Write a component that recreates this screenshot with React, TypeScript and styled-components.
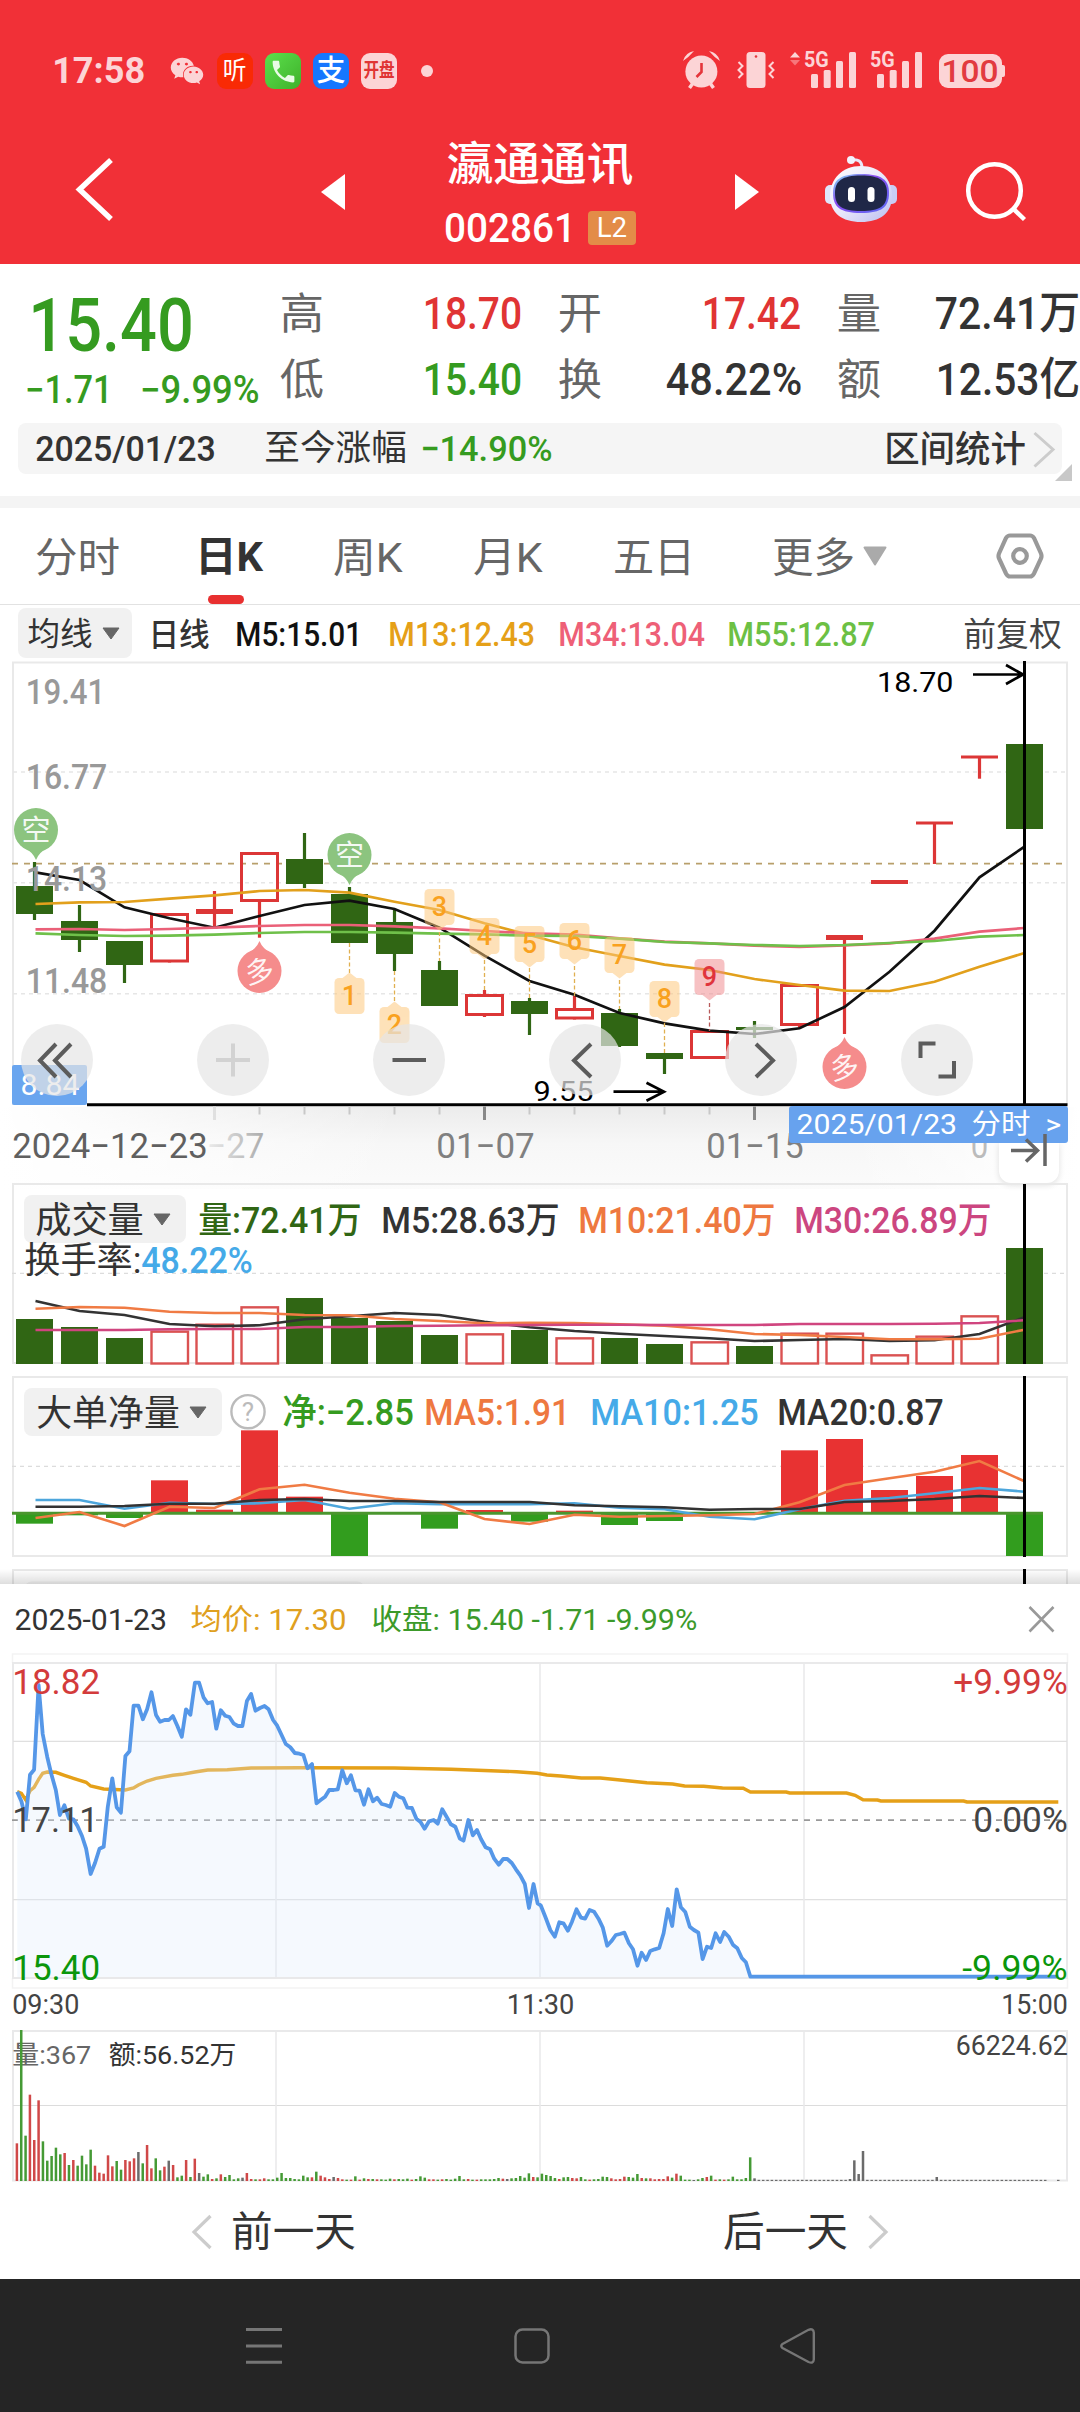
import React, { useLayoutEffect, useRef, useState } from 'react';
import styled, { createGlobalStyle } from 'styled-components';
import { FaWeixin } from 'react-icons/fa';
import { MdPhone } from 'react-icons/md';

const FONT = `Roboto, "Noto Sans CJK SC", sans-serif`;
const RED = '#e03434';
const GREEN = '#359b20';
const DARK_GREEN = '#306614';
const TINT = '#fcd4d6';

const Global = createGlobalStyle`
  body { margin: 0; background: #fff; }
  * { box-sizing: border-box; }
  svg { display: block; flex: none; overflow: visible; }
`;

const Screen = styled.div`
  width: 1080px;
  height: 2412px;
  display: flex;
  flex-direction: column;
  overflow: hidden;
  background: #fff;
  font-family: ${FONT};
  color: #333;
`;

/* ---------- text fitted to a column width ---------- */
const FitBox = styled.span<{ $w: number; $ml: number; $dy: number }>`
  display: block;
  flex: none;
  width: ${(p) => p.$w}px;
  margin-left: ${(p) => p.$ml}px;
  white-space: pre;
  padding-top: ${(p) => p.$dy}px;
`;
const FitInner = styled.span<{ $size: number; $lh: number; $c: string; $wt: number }>`
  display: inline-block;
  vertical-align: top;
  transform-origin: 0 50%;
  font-size: ${(p) => p.$size}px;
  line-height: ${(p) => p.$lh}px;
  color: ${(p) => p.$c};
  font-weight: ${(p) => p.$wt};
`;

interface FitProps {
  w: number;
  size: number;
  children: string;
  ml?: number;
  lh?: number;
  c?: string;
  wt?: number;
  dy?: number;
}

function Fit({ w, size, children, ml = 0, lh, c = '#333', wt = 400, dy = 0 }: FitProps) {
  const ref = useRef<HTMLSpanElement>(null);
  const [k, setK] = useState(1);
  useLayoutEffect(() => {
    if (ref.current) setK((w + size * 0.1) / ref.current.offsetWidth);
  }, [w, size, children]);
  return (
    <FitBox $w={w} $ml={ml} $dy={dy}>
      <FitInner
        ref={ref}
        $size={size}
        $lh={lh ?? Math.round(size * 1.2)}
        $c={c}
        $wt={wt}
        style={{ transform: `translateX(${-size * 0.05}px) scaleX(${k})` }}
      >
        {children}
      </FitInner>
    </FitBox>
  );
}

/* ---------- drawing helpers ---------- */
const Gap = styled.div<{ $ml: number }>`
  flex: none;
  margin-left: ${(p) => p.$ml}px;
`;

function Draw({ x, y, w, h, ml = 0, children }: { x: number; y: number; w: number; h: number; ml?: number; children: React.ReactNode }) {
  return (
    <Gap $ml={ml}>
      <svg width={w} height={h} viewBox={`${x} ${y} ${w} ${h}`} fill="none">
        {children}
      </svg>
    </Gap>
  );
}

function Label({ x, y, w, size, c = '#333', wt = 400, o = 1, children }: { x: number; y: number; w: number; size: number; c?: string; wt?: number; o?: number; children: string }) {
  return (
    <text
      x={x - size * 0.05}
      y={y}
      fontSize={size}
      fontFamily={FONT}
      fontWeight={wt}
      fill={c}
      opacity={o}
      textLength={w + size * 0.1}
      lengthAdjust="spacingAndGlyphs"
    >
      {children}
    </text>
  );
}

/* ---------- status bar ---------- */
const RedHead = styled.header`
  height: 264px;
  flex: none;
  background: #f13037;
`;
const StatusBar = styled.div`
  height: 142px;
  display: flex;
  align-items: center;
`;
const AppIcon = styled.div<{ $bg: string; $ml?: number }>`
  width: 36px;
  height: 36px;
  margin-left: ${(p) => p.$ml ?? 12}px;
  border-radius: 9px;
  background: ${(p) => p.$bg};
  display: flex;
  align-items: center;
  justify-content: center;
  flex: none;
`;
const Glyph = styled.span<{ $size: number; $c: string; $wt?: number; $sx?: number }>`
  font-size: ${(p) => p.$size}px;
  line-height: 36px;
  color: ${(p) => p.$c};
  font-weight: ${(p) => p.$wt ?? 400};
  transform: scaleX(${(p) => p.$sx ?? 1});
  white-space: nowrap;
`;
const Dot = styled.i`
  width: 12px;
  height: 12px;
  margin-left: 24px;
  border-radius: 50%;
  background: ${TINT};
`;

function Signal({ x, children }: { x: number; children?: React.ReactNode }) {
  return (
    <>
      {children}
      <Label x={x} y={67} w={22.5} size={22.5} c={TINT} wt={700}>5G</Label>
      <g fill={TINT}>
        <rect x={x + 6} y={74} width={7} height={14} rx={1.5} />
        <rect x={x + 18.7} y={70} width={7} height={18} rx={1.5} />
        <rect x={x + 31} y={61} width={7} height={27} rx={1.5} />
        <rect x={x + 44} y={52} width={7} height={36} rx={1.5} />
      </g>
    </>
  );
}

function Status() {
  return (
    <StatusBar>
      <Fit ml={54} w={89} size={37} c={TINT} wt={700} lh={46}>17:58</Fit>
      <Gap $ml={27}>
        <FaWeixin size={34} color={TINT} />
      </Gap>
      <AppIcon $bg="#f92a05" $ml={13}><Glyph $size={25} $c="#fff" $sx={0.95}>听</Glyph></AppIcon>
      <AppIcon $bg="linear-gradient(135deg,#5ce04c,#3eb12b)"><MdPhone size={29} color="#e9fbe6" /></AppIcon>
      <AppIcon $bg="#1677ff"><Glyph $size={29} $c="#fff" $wt={500}>支</Glyph></AppIcon>
      <AppIcon $bg={TINT}><Glyph $size={19} $c={RED} $wt={700} $sx={0.82}>开盘</Glyph></AppIcon>
      <Dot />
      <Draw x={680} y={50} w={44} h={42} ml={247}>
        <circle cx={701.4} cy={71.5} r={16} fill={TINT} />
        <path d="M683 61a14 14 0 0 1 11-10q-5 6-11 10zM720 61a14 14 0 0 0-11-10q5 6 11 10z" fill={TINT} />
        <path d="M693 83l-3.5 5M710 83l3.500 5" stroke={TINT} strokeWidth={3.5} />
        <path d="M701.500 63v9l-5 5" stroke="#e5353b" strokeWidth={2.6} />
      </Draw>
      <Draw x={735} y={50} w={42} h={42} ml={11}>
        <rect x={746.500} y={52} width={19} height={36} rx={3.500} fill={TINT} />
        <circle cx={756} cy={56.500} r={1.300} fill="#e5353b" />
        <path d="M738.500 62l4 4-4 4 4 4-4 4M773.500 62l-4 4 4 4-4 4 4 4" stroke={TINT} strokeWidth={2} />
      </Draw>
      <Draw x={788} y={50} w={70} h={42} ml={11}>
        <Signal x={805}>
          <path d="M790 57.500l5-5.500 5 5.500z" fill={TINT} />
          <path d="M790 60l5 5.500 5-5.500z" fill="#f7767b" />
        </Signal>
      </Draw>
      <Draw x={869} y={50} w={55} h={42} ml={11}>
        <Signal x={871} />
      </Draw>
      <Draw x={937} y={50} w={70} h={42} ml={13}>
        <rect x={939} y={54} width={63} height={34} rx={9} fill={TINT} />
        <rect x={1000} y={65} width={5} height={12} rx={2} fill={TINT} />
        <Label x={943} y={82.200} w={54} size={31} c="#e23a40" wt={500}>100</Label>
      </Draw>
    </StatusBar>
  );
}

/* ---------- title bar ---------- */
const TitleBar = styled.div`
  height: 122px;
  display: flex;
  align-items: flex-start;
`;
const TitleStack = styled.div`
  width: 200px;
  margin-left: 85px;
  display: flex;
  flex-direction: column;
  gap: 19px;
`;
const CodeRow = styled.div`
  display: flex;
  align-items: center;
  height: 46px;
`;
const Badge = styled.div`
  width: 48px;
  height: 34px;
  margin-left: 14px;
  padding-left: 10px;
  border-radius: 4px;
  background: #e38c48;
`;

function Robot() {
  return (
    <>
      <defs>
        <linearGradient id="rb" x1="0" y1="0" x2="1" y2="1">
          <stop offset="0" stopColor="#fff" />
          <stop offset="0.5" stopColor="#e9e8fa" />
          <stop offset="1" stopColor="#b9bdf0" />
        </linearGradient>
        <linearGradient id="rf" x1="0" y1="0" x2="1" y2="1">
          <stop offset="0" stopColor="#7fe3f5" />
          <stop offset="0.4" stopColor="#8a4cf0" />
          <stop offset="1" stopColor="#5a6cf2" />
        </linearGradient>
      </defs>
      <path d="M851 160q11-2 11 8" stroke="#e9e8fa" strokeWidth={3} />
      <circle cx={851} cy={160} r={4} fill="#f3f3fd" />
      <rect x={825} y={185} width={12} height={19} rx={5} fill="#dfe6fb" />
      <rect x={885} y={185} width={12} height={19} rx={5} fill="#c9cdf5" />
      <path d="M861 166C880 166 892 179 892 196 892 213 880 222 861 222 842 222 830 213 830 196 830 179 842 166 861 166z" fill="url(#rb)" />
      <path d="M861 174C882 174 889 180 889 193 889 207 882 213 861 213 840 213 833 207 833 193 833 180 840 174 861 174z" fill="url(#rf)" />
      <path d="M861 175.500C880 175.500 887 181 887 193 887 206 880 211 861 211 842 211 835 206 835 193 835 181 842 175.500 861 175.500z" fill="#1f2747" />
      <rect x={848} y={187} width={7} height={15} rx={3.500} fill="#fff" />
      <rect x={867.500} y={187} width={7} height={15} rx={3.500} fill="#fff" />
    </>
  );
}

function Title() {
  return (
    <TitleBar>
      <Draw x={60} y={142} w={70} h={100} ml={60}>
        <path d="M111 160L79.500 189.500 111 219" stroke="#fff" strokeWidth={5.500} />
      </Draw>
      <Draw x={310} y={142} w={45} h={100} ml={180}>
        <path d="M321 192l24-18v36z" fill="#fff" />
      </Draw>
      <TitleStack>
        <Fit ml={9} w={182} size={46} lh={44} c="#fff" wt={500}>瀛通通讯</Fit>
        <CodeRow>
          <Fit ml={6} w={128} size={41} lh={46} c="#fff" wt={500}>002861</Fit>
          <Badge><Fit w={28} size={27} lh={34} c="#fff">L2</Fit></Badge>
        </CodeRow>
      </TitleStack>
      <Draw x={725} y={142} w={45} h={100} ml={85}>
        <path d="M759 192l-24-18v36z" fill="#fff" />
      </Draw>
      <Draw x={815} y={142} w={90} h={100} ml={45}>
        <Robot />
      </Draw>
      <Draw x={955} y={142} w={80} h={100} ml={50}>
        <circle cx={994.500} cy={190.500} r={26.300} stroke="#fff" strokeWidth={4.500} />
        <path d="M1012.500 208l12 11.500" stroke="#fff" strokeWidth={4.500} />
      </Draw>
    </TitleBar>
  );
}

/* ---------- quote ---------- */
const Quote = styled.section`
  height: 159px;
  flex: none;
  display: flex;
`;
const PriceCol = styled.div`
  width: 282px;
  padding-top: 22px;
  flex: none;
`;
const Row = styled.div<{ $h: number }>`
  display: flex;
  align-items: center;
  height: ${(p) => p.$h}px;
`;
const Facts = styled.div`
  display: flex;
  flex-direction: column;
  padding-top: 17px;
`;
const InfoBar = styled.div`
  width: 1044px;
  height: 51px;
  margin: 0 18px;
  flex: none;
  display: flex;
  align-items: center;
  border-radius: 8px;
  background: #f5f5f5;
`;
const Band = styled.div`
  height: 12px;
  margin-top: 22px;
  flex: none;
  background: #f4f4f4;
`;

function QuotePanel() {
  return (
    <>
      <Quote>
        <PriceCol>
          <Row $h={80}><Fit ml={32} w={158} size={74.500} lh={80} c={GREEN} wt={500}>15.40</Fit></Row>
          <Row $h={48}>
            <Fit ml={27} w={84} size={38} lh={48} c={GREEN} wt={500}>−1.71</Fit>
            <Fit ml={31} w={116} size={38} lh={48} c={GREEN} wt={500}>−9.99%</Fit>
          </Row>
        </PriceCol>
        <Facts>
          <Row $h={66}>
            <Fit ml={0} w={40} size={43} lh={66} c="#666">高</Fit>
            <Fit ml={103} w={95} size={45} lh={66} c={RED} wt={500}>18.70</Fit>
            <Fit ml={40} w={40} size={43} lh={66} c="#666">开</Fit>
            <Fit ml={104} w={95} size={45} lh={66} c={RED} wt={500}>17.42</Fit>
            <Fit ml={40} w={40} size={43} lh={66} c="#666">量</Fit>
            <Fit ml={58} w={141} size={45} lh={66} wt={500}>72.41万</Fit>
          </Row>
          <Row $h={66}>
            <Fit ml={0} w={40} size={43} lh={66} c="#666">低</Fit>
            <Fit ml={103} w={95} size={45} lh={66} c={GREEN} wt={500}>15.40</Fit>
            <Fit ml={40} w={40} size={43} lh={66} c="#666">换</Fit>
            <Fit ml={68} w={132} size={45} lh={66} wt={500}>48.22%</Fit>
            <Fit ml={39} w={40} size={43} lh={66} c="#666">额</Fit>
            <Fit ml={59} w={140} size={45} lh={66} wt={500}>12.53亿</Fit>
          </Row>
        </Facts>
      </Quote>
      <InfoBar>
        <Fit ml={19} w={177} size={35.500} lh={48} wt={500}>2025/01/23</Fit>
        <Fit ml={52} w={139} size={35} lh={48}>至今涨幅</Fit>
        <Fit ml={17} w={129} size={35.500} lh={48} c={GREEN} wt={500}>−14.90%</Fit>
        <Fit ml={335} w={138} size={36} lh={48} dy={3} wt={500}>区间统计</Fit>
        <Draw x={1028} y={423} w={45} h={51} ml={4}>
          <path d="M1034.500 433l18.500 16.500-18.500 17" stroke="#ccc" strokeWidth={3} />
          <path d="M1052 483h22v-22z" fill="#fff" />
          <path d="M1055 481h17v-17z" fill="#c8c8c8" />
        </Draw>
      </InfoBar>
      <Band />
    </>
  );
}

/* ---------- tabs ---------- */
const TabBar = styled.nav`
  height: 97px;
  flex: none;
  display: flex;
  border-bottom: 1px solid #e2e2e2;
`;
const Tab = styled.div<{ $x: number; $w: number }>`
  width: ${(p) => p.$w}px;
  margin-left: ${(p) => p.$x}px;
  height: 96px;
  padding-top: 2px;
  display: flex;
  flex-direction: column;
  align-items: center;
  justify-content: space-between;
`;
const Underline = styled.i`
  width: 36px;
  height: 9px;
  flex: none;
  margin-right: 7px;
  border-radius: 5px;
  background: #e83030;
`;

function Tabs() {
  return (
    <TabBar>
      <Tab $x={37} $w={81}><Fit w={81} size={41} lh={94} dy={1} c="#666">分时</Fit></Tab>
      <Tab $x={79} $w={64}>
        <Fit w={64} size={41} lh={76} dy={9} wt={700}>日K</Fit>
        <Underline />
      </Tab>
      <Tab $x={74} $w={66}><Fit w={66} size={41} lh={94} dy={1} c="#666">周K</Fit></Tab>
      <Tab $x={74} $w={66}><Fit w={66} size={41} lh={94} dy={1} c="#666">月K</Fit></Tab>
      <Tab $x={74} $w={78}><Fit w={78} size={41} lh={94} dy={1} c="#666">五日</Fit></Tab>
      <Tab $x={81} $w={79}><Fit w={79} size={41} lh={94} dy={1} c="#666">更多</Fit></Tab>
      <Draw x={862} y={508} w={26} h={96} ml={9}>
        <path d="M864.500 547.500h21l-10.500 17z" fill="#aaa" stroke="#aaa" strokeLinejoin="round" strokeWidth={2} />
      </Draw>
      <Draw x={994} y={508} w={52} h={96} ml={106}>
        <path d="M1010 535.500h20q2.500 0 4 2.500l7 15.500q1 2.500 0 5l-7 15q-1.500 3-4 3h-20q-2.500 0-4-3l-7-15q-1-2.500 0-5l7-15.500q1.500-2.500 4-2.500z" stroke="#999" strokeWidth={4.200} />
        <circle cx={1020} cy={556} r={6.800} stroke="#999" strokeWidth={4.200} />
      </Draw>
    </TabBar>
  );
}

/* ---------- indicator rows ---------- */
const Pill = styled.div<{ $w: number; $h: number; $ml: number; $pl: number }>`
  width: ${(p) => p.$w}px;
  height: ${(p) => p.$h}px;
  margin-left: ${(p) => p.$ml}px;
  padding-left: ${(p) => p.$pl}px;
  flex: none;
  display: flex;
  align-items: center;
  gap: 11px;
  border-radius: 8px;
  background: #f1f1f1;
`;
function Caret() {
  return (
    <svg width="18" height="13" viewBox="0 0 18 13">
      <path d="M1 1h16L9 12z" fill="#666" stroke="#666" strokeLinejoin="round" />
    </svg>
  );
}

const MaRow = styled.div`
  height: 56px;
  flex: none;
  display: flex;
  align-items: center;
`;

function MovingAverages() {
  return (
    <MaRow>
      <Pill $w={114} $h={50} $ml={18} $pl={11}>
        <Fit w={62} size={32} lh={50} dy={2}>均线</Fit>
        <Caret />
      </Pill>
      <Fit ml={18} w={58} size={32} lh={50} dy={3} wt={500}>日线</Fit>
      <Fit ml={29} w={124} size={33} lh={50} dy={3} c="#111" wt={500}>M5:15.01</Fit>
      <Fit ml={29} w={143} size={33} lh={50} dy={3} c="#e5a018" wt={500}>M13:12.43</Fit>
      <Fit ml={27} w={143} size={33} lh={50} dy={3} c="#ee6077" wt={500}>M34:13.04</Fit>
      <Fit ml={26} w={144} size={33} lh={50} dy={3} c="#6cc044" wt={500}>M55:12.87</Fit>
      <Fit ml={92} w={95} size={33} lh={50} dy={3} c="#444">前复权</Fit>
    </MaRow>
  );
}

/* ---------- daily chart ---------- */
const cx = (i: number) => 34.5 + 45 * i;
const pts = (ys: number[], base: number) => ys.map((y, i) => `${i === 0 ? 35.5 : cx(i)},${(base + y / 3).toFixed(1)}`).join(' ');

type Kind = 'g' | 'r' | 's';
// kind, body top, body bottom, high, low
const CANDLES: [Kind, number, number, number, number][] = [
  ['g', 886, 914, 862, 920], ['g', 921, 940, 905, 952], ['g', 941, 965, 941, 983], ['r', 913, 962.5, 913, 962],
  ['s', 909, 914, 891, 928], ['r', 852, 902, 852, 937.7], ['g', 859, 884, 833, 888], ['g', 894, 943, 887, 943],
  ['g', 922, 954, 909, 971], ['g', 970, 1006, 961, 1006], ['r', 994, 1016, 990, 1017], ['g', 1001, 1014, 998, 1035],
  ['r', 1008, 1019.5, 996, 1019], ['g', 1013, 1046, 1009, 1047], ['g', 1053, 1059, 1053, 1074], ['r', 1030, 1059, 1030, 1059],
  ['g', 1027, 1030, 1021, 1038], ['r', 984, 1026, 984, 1029], ['s', 935, 940, 935, 1034], ['s', 880, 884, 880, 884],
  ['s', 821.5, 824.5, 822, 864], ['s', 755.5, 758.5, 756, 778.7], ['g', 744, 829, 744, 829],
];
const M5 = [637, 660, 742, 775, 803, 768, 735, 722, 747, 803, 887, 963, 1004, 1059, 1090, 1112, 1122, 1105, 1041, 935, 812, 652, 560];
const M13 = [732, 727, 726, 716, 706, 693, 690, 698, 725, 750, 790, 825, 862, 888, 914, 930, 957, 975, 992, 993, 965, 920, 879];
const M34 = [808, 807, 810, 807, 803, 798, 795, 795, 799, 805, 813, 820, 824, 835, 845, 850, 857, 861, 856, 850, 836, 815, 804];
const M55 = [820, 825, 828, 827, 824, 819, 816, 816, 818, 821, 823, 827, 828, 836, 846, 850, 855, 858, 855, 849, 843, 830, 825];

// number, body top, pointer direction, dash from, dash to
const TAGS: [number, number, 'up' | 'down', number, number][] = [
  [1, 978, 'up', 943, 973], [2, 1007, 'up', 971, 1001], [3, 889, 'down', 932, 961], [4, 918, 'down', 960, 990], [5, 926, 'down', 968, 998],
  [6, 923, 'down', 966, 996], [7, 937, 'down', 980, 1009], [8, 981, 'down', 1023, 1053], [9, 959, 'down', 1003, 1031],
];

function Pin({ x, y, up, children }: { x: number; y: number; up?: boolean; children: string }) {
  const s = up ? -1 : 1;
  return (
    <g>
      <path d={`M${x - 13} ${y + s * 17}Q${x - 3} ${y + s * 22} ${x} ${y + s * 30}Q${x + 3} ${y + s * 22} ${x + 13} ${y + s * 17}z`} fill={up ? '#f58c8c' : '#8cc47f'} />
      <circle cx={x} cy={y} r={22} fill={up ? '#f58c8c' : '#8cc47f'} />
      <text x={x} y={y + 11} fontSize={29} textAnchor="middle" fontFamily={FONT} fill="#fff" fillOpacity={0.92} transform={up ? `rotate(-10 ${x} ${y})` : undefined}>{children}</text>
    </g>
  );
}

const ChartArea = styled.section`
  position: relative;
  height: 523px;
  flex: none;
`;
const AxisShade = styled.div`
  position: absolute;
  left: 0;
  right: 0;
  top: 446px;
  height: 82px;
  background: linear-gradient(90deg, #fff 0, rgba(255, 255, 255, 0) 400px, rgba(255, 255, 255, 0) 850px, #fff 1080px),
    linear-gradient(180deg, #ececec 0, #f7f7f7 45%, #fbfbfb 100%);
`;
const Layer = styled.div`
  position: absolute;
  inset: 0;
`;
const Tools = styled.div`
  position: absolute;
  left: 21px;
  top: 363px;
  display: flex;
  gap: 104px;
`;
const Tool = styled.button`
  width: 72px;
  height: 72px;
  padding: 0;
  border: 0;
  border-radius: 50%;
  background: rgba(229, 229, 229, 0.7);
`;
const DateBadge = styled.div`
  position: absolute;
  left: 789px;
  top: 444.500px;
  width: 278.500px;
  height: 37px;
  display: flex;
  align-items: center;
  border-radius: 3px;
  background: #67a2ee;
`;
const JumpEnd = styled.div`
  position: absolute;
  left: 999px;
  top: 481px;
  width: 60px;
  height: 41px;
  border-radius: 0 0 12px 12px;
  background: #fff;
  box-shadow: 0 2px 6px rgba(0, 0, 0, 0.12);
`;

const TOOL_PATHS: [string, string][] = [
  ['M35 20L19 36.500 35 53M50 20L34 36.500 50 53', '#5c5c5c'],
  ['M36 19.500v33M19 36h34', '#d2d2d2'],
  ['M19.500 36h33.500', '#5c5c5c'],
  ['M42 20L25 36.500 42 53', '#5c5c5c'],
  ['M31 20L48 36.500 31 53', '#5c5c5c'],
  ['M34.500 19.500H19.500V34M53 37v15.500H37.500', '#5c5c5c'],
];

function DailyChart() {
  return (
    <ChartArea>
      <AxisShade />
      <Layer>
        <svg width={1080} height={523} viewBox="0 661 1080 523" fill="none">
          <path d="M13 1105V662.500H1067V1105" stroke="#e9e9e9" strokeWidth={2} />
          <path d="M13 772H1067M13 882.700H1067M13 993.700H1067" stroke="#e6e6e6" strokeWidth={1.500} strokeDasharray="4 4" />
          <path d="M12 863.700H1062" stroke="#b89f6b" strokeWidth={1.700} strokeDasharray="6 6" />
          <rect x={12} y={1065} width={75} height={40} rx={2} fill="#69a5ef" />
          <Label x={22} y={1095} w={56} size={29} c="#fff">8.84</Label>

          {CANDLES.map(([k, t, b, hi, lo], i) => {
            const x = cx(i);
            const c = k === 'g' ? DARK_GREEN : '#dc3636';
            return (
              <g key={i}>
                {k === 'r' ? (
                  <>
                    <path d={`M${x} ${hi}V${t}M${x} ${b}V${lo}`} stroke={c} strokeWidth={3.2} />
                    <rect x={x - 18} y={t + 1.5} width={36} height={b - t - 3} stroke={c} strokeWidth={3} />
                  </>
                ) : (
                  <>
                    <path d={`M${x} ${hi}V${lo}`} stroke={c} strokeWidth={3.2} />
                    <rect x={x - 18.500} y={t} width={37} height={b - t} fill={c} />
                  </>
                )}
              </g>
            );
          })}
          <polyline points={pts(M5, 660)} stroke="#111" strokeWidth={2.700} />
          <polyline points={pts(M13, 660)} stroke="#e2a01c" strokeWidth={2.700} />
          <polyline points={pts(M34, 660)} stroke="#ea6078" strokeWidth={2.700} />
          <polyline points={pts(M55, 660)} stroke="#6fc04a" strokeWidth={2.700} />

          <Label x={27.500} y={703.700} w={76} size={35.500} c="#999" wt={500}>19.41</Label>
          <Label x={27.500} y={789} w={78} size={35.500} c="#999" wt={500}>16.77</Label>
          <Label x={27.500} y={890.700} w={78} size={35.500} c="#999" wt={500}>14.13</Label>
          <Label x={27.500} y={992.700} w={78} size={35.500} c="#999" wt={500}>11.48</Label>

          {TAGS.map(([n, top, dir, a, b]) => {
            const x = cx(n + 6);
            const last = n === 9;
            const tip = dir === 'up' ? `M${x - 7} ${top}L${x} ${top - 5.5}L${x + 7} ${top}z` : `M${x - 7} ${top + 36}L${x} ${top + 41.500}L${x + 7} ${top + 36}z`;
            return (
              <g key={n}>
                <path d={`M${x} ${a}V${b}`} stroke={last ? '#b85a5a' : '#e0b050'} strokeWidth={1.300} strokeDasharray="4 2.500" />
                <g fill={last ? '#f08a8e' : '#fec778'} opacity={0.52}>
                  <rect x={x - 15} y={top} width={30} height={36} rx={4.500} />
                  <path d={tip} />
                </g>
                <text x={x} y={top + 27} fontSize={27} fontWeight={500} textAnchor="middle" fontFamily={FONT} fill={last ? '#e0343c' : '#f9a11f'}>{n}</text>
              </g>
            );
          })}

          <Pin x={36} y={830}>空</Pin>
          <Pin x={349.500} y={855}>空</Pin>
          <Pin x={259.500} y={971} up>多</Pin>
          <Pin x={844.500} y={1067} up>多</Pin>

          <Label x={878.500} y={692} w={73.500} size={28.500} c="#000">18.70</Label>
          <path d="M973 674.500H1023M1006 665L1023 674.500 1006 684" stroke="#000" strokeWidth={2.700} />
          <Label x={535} y={1100.700} w={57} size={28.500} c="#000">9.55</Label>
          <path d="M613.500 1091.700H664M646.500 1082.700L664 1091.700 646.500 1100.700" stroke="#000" strokeWidth={2.700} />

          <path d="M87 1104.700H1067.500" stroke="#000" strokeWidth={3} />
          <path d="M1024.500 661V1105" stroke="#000" strokeWidth={3} />
          {[5, 6, 7, 8, 9, 11, 12, 13, 14, 15].map((i) => (
            <path key={i} d={`M${cx(i)} 1106.500v8`} stroke="#c8c8c8" strokeWidth={2} />
          ))}
          <path d="M214.500 1106.500v13.500" stroke="#e0e0e0" strokeWidth={3} />
          <path d="M484.500 1106.500v13.500M754.500 1106.500v13.500" stroke="#888" strokeWidth={3} />
          <Label x={14} y={1158} w={192} size={35} c="#606060">2024−12−23</Label>
          <defs>
            <linearGradient id="fade" gradientUnits="userSpaceOnUse" x1="205" y1="0" x2="265" y2="0">
              <stop offset="0" stopColor="#eee" />
              <stop offset="1" stopColor="#aaa" />
            </linearGradient>
          </defs>
          <Label x={208.500} y={1158} w={54} size={35} c="url(#fade)">−27</Label>
          <Label x={438} y={1158} w={95} size={35} c="#808080">01−07</Label>
          <Label x={708} y={1158} w={94} size={35} c="#808080">01−15</Label>
          <Label x={972.500} y={1158} w={14} size={35} c="#bbb">0</Label>
        </svg>
      </Layer>
      <Tools>
        {TOOL_PATHS.map(([d, c]) => (
          <Tool key={d}>
            <svg width={72} height={72} viewBox="0 0 72 72" fill="none">
              <path d={d} stroke={c} strokeWidth={4} />
            </svg>
          </Tool>
        ))}
      </Tools>
      <JumpEnd />
      <DateBadge>
        <Fit ml={9} w={158} size={28.500} lh={37} dy={1} c="#fff">2025/01/23</Fit>
        <Fit ml={17} w={56} size={28.500} lh={37} dy={1} c="#fff">分时</Fit>
        <Fit ml={18} w={13} size={28.500} lh={37} dy={1} c="#fff">&gt;</Fit>
      </DateBadge>
      <Layer>
        <svg width={1080} height={523} viewBox="0 661 1080 523" fill="none">
          <path d="M1011 1150.500H1037M1026 1139.500L1037.500 1150.500 1026 1161.500M1045 1134V1166" stroke="#666" strokeWidth={3.500} />
        </svg>
      </Layer>
    </ChartArea>
  );
}

/* ---------- indicator panels ---------- */
const SubPanel = styled.section<{ $h: number }>`
  position: relative;
  height: ${(p) => p.$h}px;
  flex: none;
`;
const Legend = styled.div<{ $pt: number }>`
  position: relative;
  padding-top: ${(p) => p.$pt}px;
`;

const VOL: [Kind, number][] = [
  ['g', 447], ['g', 471], ['g', 504], ['r', 482], ['r', 461], ['r', 409], ['g', 384], ['g', 444], ['g', 453], ['g', 495], ['r', 490], ['g', 480],
  ['r', 502], ['g', 504], ['g', 522], ['r', 514], ['g', 528], ['r', 488], ['r', 488], ['r', 553], ['r', 497], ['r', 436], ['g', 234],
];
const V5 = [393, 423, 435, 462, 469, 466, 448, 439, 429, 435, 455, 472, 483, 491, 498, 505, 513, 510, 507, 513, 511, 492, 442];
const V10 = [416, 411, 413, 425, 429, 429, 435, 436, 447, 453, 460, 458, 459, 463, 467, 478, 492, 495, 501, 508, 508, 506, 479];
const V30 = [480, 480, 480, 478, 477, 477, 471, 471, 468, 467, 466, 465, 464, 464, 465, 465, 465, 462, 462, 462, 461, 459, 451];

function VolumePanel() {
  return (
    <SubPanel $h={192}>
      <Layer>
        <svg width={1080} height={192} viewBox="0 1184 1080 192" fill="none">
          <rect x={13} y={1184} width={1054} height={179} stroke="#e9e9e9" strokeWidth={2} />
          <path d="M12 1273.300H1067" stroke="#dcdcdc" strokeWidth={1.200} strokeDasharray="4 4" />
          {VOL.map(([k, y], i) => {
            const t = 1170 + y / 3;
            return k === 'g' ? (
              <rect key={i} x={cx(i) - 18.500} y={t} width={37} height={1364 - t} fill={DARK_GREEN} />
            ) : (
              <rect key={i} x={cx(i) - 18} y={t + 1} width={36.500} height={1363.500 - t - 1} fill="#fff" stroke="#da5252" strokeWidth={2.400} />
            );
          })}
          <polyline points={pts(V5, 1170)} stroke="#333" strokeWidth={2.600} />
          <polyline points={pts(V10, 1170)} stroke="#f07b44" strokeWidth={2.600} />
          <polyline points={pts(V30, 1170)} stroke="#d0457f" strokeWidth={2.600} />
          <path d="M1024.500 1184V1364" stroke="#000" strokeWidth={3} />
        </svg>
      </Layer>
      <Legend $pt={11}>
        <Row $h={48}>
          <Pill $w={162} $h={48} $ml={24} $pl={13}>
            <Fit w={105} size={36} lh={48} dy={3}>成交量</Fit>
            <Caret />
          </Pill>
          <Fit ml={14} w={160} size={36.500} lh={48} dy={3} c={DARK_GREEN} wt={500}>量:72.41万</Fit>
          <Fit ml={23} w={175} size={36.500} lh={48} dy={3} wt={500}>M5:28.63万</Fit>
          <Fit ml={22} w={194} size={36.500} lh={48} dy={3} c="#ee7840" wt={500}>M10:21.40万</Fit>
          <Fit ml={22} w={194} size={36.500} lh={48} dy={3} c="#cc4680" wt={500}>M30:26.89万</Fit>
        </Row>
        <Row $h={34}>
          <Fit ml={26} w={114} size={36} lh={34} dy={1}>换手率:</Fit>
          <Fit ml={3} w={108} size={36.500} lh={34} dy={1} c="#45aae8" wt={500}>48.22%</Fit>
        </Row>
      </Legend>
    </SubPanel>
  );
}

const NET = [1061, 1036, 1044, 931, 1019, 781, 980, 1158, 1030, 1076, 1020, 1055, 1022, 1065, 1053, 1030, 1030, 841, 807, 960, 918, 855, 1158];
const N5 = [1044, 1026, 1068, 1010, 1014, 958, 944, 968, 986, 997, 1047, 1062, 1034, 1040, 1038, 1036, 1032, 997, 945, 925, 905, 873, 934];
const N10 = [990, 990, 1016, 998, 1002, 1000, 990, 1016, 1000, 1003, 1003, 1003, 1000, 1013, 1018, 1040, 1048, 1018, 992, 984, 970, 954, 965];
const N20 = [1010, 1010, 1008, 1001, 1001, 990, 987, 993, 993, 996, 996, 996, 1006, 1009, 1012, 1019, 1017, 1017, 996, 993, 987, 978, 984];

function NetPanel() {
  return (
    <SubPanel $h={193}>
      <Layer>
        <svg width={1080} height={193} viewBox="0 1376 1080 193" fill="none">
          <rect x={13} y={1377} width={1054} height={179} stroke="#e9e9e9" strokeWidth={2} />
          <path d="M12 1466.300H1067" stroke="#dcdcdc" strokeWidth={1.200} strokeDasharray="4 4" />
          {NET.map((y, i) => {
            const e = 1170 + y / 3;
            const z = 1513.3;
            return <rect key={i} x={cx(i) - 18.500} y={Math.min(e, z)} width={37} height={Math.abs(e - z)} fill={y < 1030 ? '#e83232' : '#329d1e'} />;
          })}
          <path d="M12 1513.300H1043" stroke="#4a962e" strokeWidth={3} />
          <polyline points={pts(N10, 1170)} stroke="#4da6dc" strokeWidth={2.600} />
          <polyline points={pts(N5, 1170)} stroke="#f07b44" strokeWidth={2.600} />
          <polyline points={pts(N20, 1170)} stroke="#333" strokeWidth={2.600} />
          <path d="M1024.500 1376V1557" stroke="#000" strokeWidth={3} />
        </svg>
      </Layer>
      <Legend $pt={12}>
        <Row $h={48}>
          <Pill $w={198} $h={48} $ml={24} $pl={14}>
            <Fit w={140} size={36} lh={48} dy={3}>大单净量</Fit>
            <Caret />
          </Pill>
          <Draw x={229} y={1388} w={38} h={48} ml={7}>
            <circle cx={248} cy={1411.700} r={16.600} stroke="#bbb" strokeWidth={2.400} />
            <text x={248} y={1421} fontSize={26} textAnchor="middle" fontFamily={FONT} fill="#bbb">?</text>
          </Draw>
          <Fit ml={17} w={128} size={36.500} lh={48} dy={2} c={GREEN} wt={500}>净:−2.85</Fit>
          <Fit ml={14} w={142} size={36.500} lh={48} dy={2} c="#ee7840" wt={500}>MA5:1.91</Fit>
          <Fit ml={24} w={165} size={36.500} lh={48} dy={2} c="#45aae8" wt={500}>MA10:1.25</Fit>
          <Fit ml={22} w={163} size={36.500} lh={48} dy={2} wt={500}>MA20:0.87</Fit>
        </Row>
      </Legend>
    </SubPanel>
  );
}

const CutPanel = styled.div`
  position: relative;
  height: 15px;
  flex: none;
  overflow: hidden;
  &::after {
    content: '';
    position: absolute;
    inset: 0;
    background: linear-gradient(180deg, rgba(0, 0, 0, 0) 0, rgba(0, 0, 0, 0.13) 100%);
  }
`;

/* ---------- intraday sheet ---------- */
const Sheet = styled.section`
  height: 695px;
  flex: none;
  background: #fff;
`;
const SheetHead = styled.div`
  height: 69px;
  display: flex;
  align-items: center;
  padding-top: 3px;
`;

const PRICE: number[][] = [
  [50,635],[62,664],[75,718],[87,584],[99,569],[112,315],[124,462],[137,530],[149,582],[162,630],[174,705],[187,676],[200,716],[213,718],[225,738],[238,768],[250,806],[263,882],[276,848],[289,806],[301,800],[313,680],[326,595],[339,682],[351,698],[364,528],[376,514],[388,377],[402,377],[415,418],[427,388],[440,337],[453,405],[465,425],[478,420],[490,420],[502,408],[515,438],[528,470],[540,388],[553,404],[566,308],[578,308],[591,352],[603,370],[616,366],[628,446],[641,391],[654,407],[666,411],[679,431],[691,438],[704,438],[717,363],[729,342],[742,392],[755,384],[768,378],[780,388],[793,420],[805,437],[818,466],[830,492],[843,502],[856,519],[869,521],[881,525],[893,565],[906,552],[919,670],[931,660],[944,650],[956,630],[969,630],[981,628],[994,571],[1007,610],[1019,586],[1032,631],[1044,632],[1057,674],[1070,628],[1083,664],[1095,653],[1108,672],[1120,675],[1133,680],[1146,639],[1158,650],[1171,655],[1183,683],[1196,684],[1209,716],[1221,726],[1233,746],[1246,724],[1259,720],[1271,731],[1284,688],[1297,711],[1309,733],[1322,740],[1335,776],[1346,782],[1360,720],[1373,766],[1385,750],[1397,778],[1410,802],[1423,808],[1435,836],[1448,854],[1461,837],[1473,837],[1486,849],[1498,868],[1511,887],[1524,912],[1536,984],[1549,912],[1561,970],
  [1570,976],[1584,1012],[1598,1050],[1611,1070],[1624,1027],[1636,1030],[1649,1052],[1661,1025],[1674,988],[1687,1013],[1699,1016],[1712,990],[1725,995],[1738,1016],[1750,1042],[1763,1097],[1775,1084],[1788,1065],[1800,1062],[1813,1058],[1826,1090],[1838,1108],[1851,1157],[1863,1118],[1876,1140],[1888,1113],[1901,1108],[1914,1104],[1927,1060],[1939,987],[1952,1038],[1965,928],[1977,982],[1990,996],[2003,1040],[2015,1050],[2028,1058],[2040,1137],[2053,1100],[2065,1104],[2078,1060],[2091,1086],[2103,1056],[2116,1070],[2128,1094],[2141,1105],[2154,1134],[2166,1147],[2179,1190],[3073,1190],
];
const AVG: number[][] = [
  [50,635],[62,640],[75,660],[87,632],[99,622],[112,598],[124,580],[137,576],[162,577],[187,586],[213,595],[250,607],[263,618],[301,627],[364,630],[388,624],[402,615],[427,603],[453,595],[502,586],[528,583],[566,576],[603,570],[660,569],[729,564],[870,563],[1145,564],[1310,568],[1425,572],[1500,575],[1560,580],
  [1588,585],[1628,588],[1688,594],[1743,594],[1808,601],[1878,608],[1953,612],[1988,618],[2043,619],[2098,624],[2158,625],[2179,636],[2283,636],[2293,639],[2458,639],[2483,646],[2506,659],[2548,660],[2558,663],[2798,663],[2808,666],[3073,666],
];
const scale = (p: number[][]) => p.map(([x, y]) => `${(x / 2.9037).toFixed(1)},${(1580 + y / 3).toFixed(1)}`).join(' ');

function Intraday() {
  const line = scale(PRICE);
  return (
    <svg width={1080} height={370} viewBox="0 1653 1080 370" fill="none">
      <path d="M12.500 1663V1654H1067.500V1663M12.500 1978V1988H1067.500V1978" stroke="#f3f3f3" strokeWidth={1.600} />
      <rect x={13} y={1663} width={1054} height={315} stroke="#e9e9ea" strokeWidth={2} />
      <path d="M13 1741.300H1067M13 1899.700H1067" stroke="#e0e0e0" strokeWidth={1.200} />
      <path d="M276 1663V1978M540 1663V1978M804 1663V1978" stroke="#e9e9ea" strokeWidth={1.500} />
      <path d="M12 1820.200H1062" stroke="#999" strokeWidth={1.700} strokeDasharray="6 6" />
      <polyline points={scale(AVG)} stroke="#e5a018" strokeWidth={3.400} />
      <polygon points={`17.200,1977 ${line} 1058,1977`} fill="rgba(222,235,252,0.3)" />
      <polyline points={line} stroke="#5597e8" strokeWidth={3.800} strokeLinejoin="round" />
      <Label x={14} y={1694} w={84.500} size={34.700} c="#d33b3b">18.82</Label>
      <Label x={14} y={1832} w={83} size={34.700} c="#444">17.11</Label>
      <Label x={14} y={1980} w={84.500} size={34.700} c="#0b960b">15.40</Label>
      <Label x={955} y={1694} w={111} size={34.700} c="#d33b3b">+9.99%</Label>
      <Label x={975} y={1832} w={91} size={34.700} c="#444">0.00%</Label>
      <Label x={964} y={1980} w={102} size={34.700} c="#0b960b">-9.99%</Label>
      <Label x={13.500} y={2013.500} w={64.500} size={27} c="#444">09:30</Label>
      <Label x={508} y={2013.500} w={65} size={27} c="#444">11:30</Label>
      <Label x={1002.500} y={2013.500} w={64} size={27} c="#444">15:00</Label>
    </svg>
  );
}

const TRADES =
  'r400 g60 g377 r254 r390 r271 g394 g452 g438 g413 g433 r429 g465 r450 g467 g437 g463 g419 r467 r488 r491 r436 r469 g453 g479 r450 r454 r445 k426 g460 r405 r475 g445 g481 r470 k452 r465 g502 g497 r450 g501 r446 k489 g500 g493 r507 g505 r493 g501 g495 g508 g505 k503 r489 r507 g508 r508 r505 g508 g508 g503 g489 g504 g504 g507 g508 g497 g502 r502 g485 r497 r502 r507 k501 r504 r508 g509 r509 g499 r509 g505 r507 g507 r508 g508 g509 g506 r508 g507 g508 g506 r509 g507 g499 g503 r508 r508 g509 r508 g507 g509 g506 g498 g508 r507 g509 r509 g508 g508 g508 g507 g504 r506 k507 g505 g504 g498 g503 g490 r501 g502 g491 g495 g498 g504 r507 g502 g501 r504 r505 g501 g508 r509 g508 g507 g500 g501 r505 r508 r507 r500 g501 g503 g492 r504 g505 r505 r508 r507 r507 r499 g503 r491 g497 g509 g509 k510 g508 g504 r501 g497 r509 g508 r509 g508 g500 g508 g508 g504 g442 k505';
const MINUTES: [number, string, number][] = TRADES.split(' ').map((s, i) => [i, s[0], +s.slice(1)]);
for (let i = MINUTES.length; i <= 237; i++) {
  const special: Record<number, number> = { 192: 507, 193: 451, 194: 492, 195: 423, 212: 501 };
  MINUTES.push([i, 'k', special[i] ?? 509.5]);
}
MINUTES.push([240, 'k', 509.5]);
const TRADE_COLORS: Record<string, string> = { r: '#d04848', g: '#459a35', k: '#6b6b6b' };

function Trades() {
  return (
    <svg width={1080} height={166} viewBox="0 2023 1080 166" fill="none">
      <rect x={13} y={2031} width={1054} height={149.500} stroke="#e9e9ea" strokeWidth={2} />
      <path d="M13 2105.500H1067" stroke="#dcdcdc" strokeWidth={1.200} />
      <path d="M276 2031V2180M540 2031V2180M804 2031V2180" stroke="#e9e9ea" strokeWidth={1.500} />
      <Label x={13.500} y={2064} w={76.500} size={26.500} c="#666">量:367</Label>
      {MINUTES.map(([i, c, y]) => (
        <rect key={i} x={16.9 + 4.339 * i - 1.25} y={2010 + y / 3} width={2.500} height={171 - y / 3} fill={TRADE_COLORS[c]} />
      ))}
      <Label x={110} y={2064} w={125} size={26.500}>额:56.52万</Label>
      <Label x={957} y={2055} w={109.500} size={27} c="#444">66224.62</Label>
    </svg>
  );
}

const DaySwitch = styled.div`
  height: 86px;
  display: flex;
  align-items: center;
`;
const NavBar = styled.footer`
  height: 133px;
  flex: none;
  display: flex;
  align-items: center;
  background: #252525;
`;

export default function App() {
  return (
    <Screen>
      <Global />
      <RedHead>
        <Status />
        <Title />
      </RedHead>
      <QuotePanel />
      <Tabs />
      <MovingAverages />
      <DailyChart />
      <VolumePanel />
      <NetPanel />
      <CutPanel>
        <svg width={1080} height={15} viewBox="0 1569 1080 15" fill="none">
          <path d="M13 1590V1570H1067V1590" stroke="#e9e9e9" strokeWidth={2} />
          <rect x={24} y={1581.500} width={341} height={40} rx={8} fill="#f4f4f4" />
          <path d="M1024.500 1569V1590" stroke="#000" strokeWidth={3} />
        </svg>
      </CutPanel>
      <Sheet>
        <SheetHead>
          <Fit ml={16} w={149} size={29} lh={40}>2025-01-23</Fit>
          <Fit ml={27} w={153} size={29} lh={40} c="#dfa020">均价: 17.30</Fit>
          <Fit ml={28} w={323} size={29} lh={40} c="#3c9a2a">收盘: 15.40 -1.71 -9.99%</Fit>
          <Draw x={1024} y={1602} w={36} h={36} ml={328}>
            <path d="M1029.500 1607L1053.500 1631.500M1053.500 1607L1029.500 1631.500" stroke="#999" strokeWidth={2.600} />
          </Draw>
        </SheetHead>
        <Intraday />
        <Trades />
        <DaySwitch>
          <Draw x={190} y={2211} w={24} h={40} ml={190}>
            <path d="M210.500 2215L194 2231 210.500 2247" stroke="#ccc" strokeWidth={3.200} />
          </Draw>
          <Fit ml={19} w={121} size={41} lh={62}>前一天</Fit>
          <Fit ml={371} w={121} size={41} lh={62}>后一天</Fit>
          <Draw x={866} y={2211} w={24} h={40} ml={20}>
            <path d="M869.500 2215L886 2231 869.500 2247" stroke="#ccc" strokeWidth={3.200} />
          </Draw>
        </DaySwitch>
      </Sheet>
      <NavBar>
        <Draw x={246} y={2326} w={36} h={40} ml={246}>
          <path d="M246 2329.500h36M246 2346h36M246 2362.300h36" stroke="#767676" strokeWidth={3} />
        </Draw>
        <Draw x={513} y={2326} w={38} h={40} ml={231}>
          <rect x={515.500} y={2329.500} width={33} height={33} rx={7} stroke="#767676" strokeWidth={2.500} />
        </Draw>
        <Draw x={779} y={2326} w={38} h={40} ml={228}>
          <path d="M782.500 2344L808.500 2329.800Q813.500 2328 813.800 2332.500V2359.500Q813.500 2364 808.500 2362L782.500 2348Q780 2346 782.500 2344z" stroke="#767676" strokeWidth={2.400} />
        </Draw>
      </NavBar>
    </Screen>
  );
}
